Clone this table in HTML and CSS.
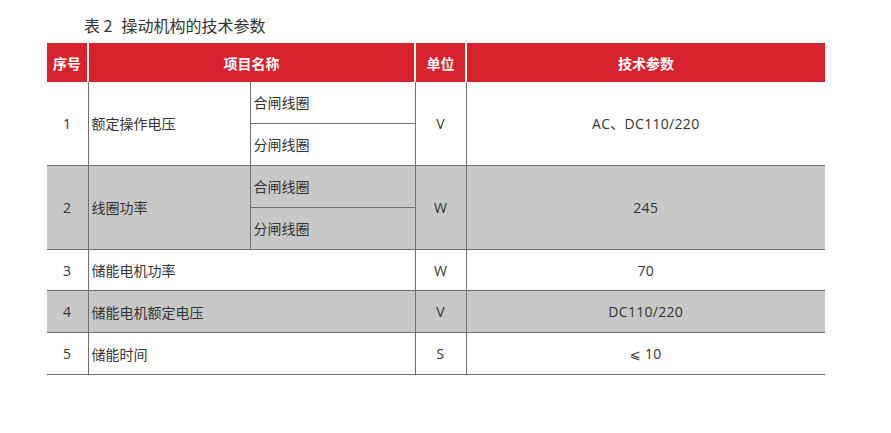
FILE: index.html
```html
<!DOCTYPE html>
<html lang="zh">
<head>
<meta charset="utf-8">
<title>表 2 操动机构的技术参数</title>
<link rel="stylesheet" href="styles.css">
</head>
<body>
<div class="page">
  <h1 class="caption">表 2<span class="gap"></span>操动机构的技术参数</h1>
  <table class="spec">
    <colgroup>
      <col class="c-no"><col class="c-name"><col class="c-sub"><col class="c-unit"><col class="c-val">
    </colgroup>
    <thead>
      <tr>
        <th>序号</th>
        <th colspan="2">项目名称</th>
        <th>单位</th>
        <th>技术参数</th>
      </tr>
    </thead>
    <tbody>
      <tr>
        <td class="no" rowspan="2">1</td>
        <td class="name" rowspan="2">额定操作电压</td>
        <td class="name">合闸线圈</td>
        <td class="ctr" rowspan="2">V</td>
        <td class="ctr" rowspan="2">AC、DC110/220</td>
      </tr>
      <tr><td class="name">分闸线圈</td></tr>
      <tr class="shade">
        <td class="no" rowspan="2">2</td>
        <td class="name" rowspan="2">线圈功率</td>
        <td class="name">合闸线圈</td>
        <td class="ctr" rowspan="2">W</td>
        <td class="ctr" rowspan="2">245</td>
      </tr>
      <tr class="shade"><td class="name">分闸线圈</td></tr>
      <tr>
        <td class="no">3</td>
        <td class="name" colspan="2">储能电机功率</td>
        <td class="ctr">W</td>
        <td class="ctr">70</td>
      </tr>
      <tr class="shade">
        <td class="no">4</td>
        <td class="name" colspan="2">储能电机额定电压</td>
        <td class="ctr">V</td>
        <td class="ctr">DC110/220</td>
      </tr>
      <tr>
        <td class="no">5</td>
        <td class="name" colspan="2">储能时间</td>
        <td class="ctr">S</td>
        <td class="ctr"><span class="le">⩽</span> 10</td>
      </tr>
    </tbody>
  </table>
</div>
</body>
</html>
```

FILE: styles.css
```css
html, body {
  margin: 0;
  padding: 0;
  background: #ffffff;
}

body {
  font-family: "Open Sans", "Noto Sans CJK SC", sans-serif;
  color: #333333;
}

.page {
  padding: 15px 0 0 47px;
}

.caption {
  margin: 0 0 7px 37px;
  font-family: "Noto Sans CJK SC", sans-serif;
  font-weight: 400;
  font-size: 16px;
  line-height: 21px;
  color: #333333;
}

.caption .gap {
  display: inline-block;
  width: 9px;
}

.spec {
  border-collapse: collapse;
  table-layout: fixed;
  width: 778px;
}

.c-no { width: 41px; }
.c-name { width: 162px; }
.c-sub { width: 165px; }
.c-unit { width: 51px; }
.c-val { width: 359px; }

.spec th {
  height: 39px;
  padding: 0;
  background: #d7212d;
  color: #ffffff;
  font-family: "Noto Sans CJK SC", sans-serif;
  font-weight: 700;
  font-size: 14px;
  text-align: center;
  border-left: 2px solid #ffffff;
}

.spec th:first-child {
  border-left: 0;
}

.spec td {
  height: 40.9px;
  padding: 0;
  font-size: 14px;
  letter-spacing: 0.3px;
  border-left: 1px solid #707070;
  border-bottom: 1px solid #707070;
  vertical-align: middle;
}

.spec td.no {
  border-left: 0;
  text-align: center;
}

.spec td.name {
  padding-left: 3px;
  font-family: "Noto Sans CJK SC", sans-serif;
  font-size: 14px;
  letter-spacing: 0;
}

.spec td.ctr {
  text-align: center;
}

.spec .le {
  font-family: "DejaVu Sans", sans-serif;
  font-size: 13px;
}

.spec tr.shade td {
  background: #c8c8c9;
}
```
